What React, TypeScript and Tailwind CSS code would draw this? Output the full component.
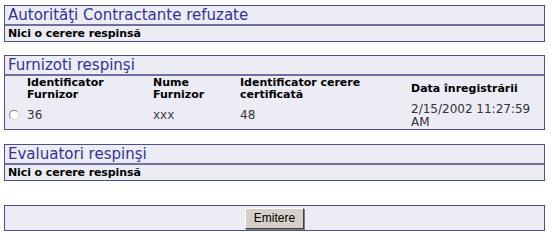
import React from "react";

const box = "border border-[#4f4f80] bg-[#ececf4]";
const head = "h-[20px] border-b-2 border-[#6f6fa0] pl-[3px] text-[15px] leading-[18px] text-[#333399]";
const body = "h-[15px] pl-[3px] text-[11px] font-bold leading-[15px] text-black tracking-[-0.1px]";
const th = "text-left align-middle font-bold leading-[12px] text-black p-0";
const td = "align-middle p-0 leading-[13px]";

export default function App() {
  return (
    <div className="min-h-[242px] w-[553px] bg-white pl-[4px] pt-[5px] font-['DejaVu_Sans',Verdana,sans-serif]">
      <div className="w-[541px]">
        <div className={box}>
          <div className={head}>Autorităţi Contractante refuzate</div>
          <div className={body}>Nici o cerere respinsă</div>
        </div>

        <div className={`${box} mt-[13px]`}>
          <div className={head}>Furnizoti respinşi</div>
          <table className="w-full border-collapse text-[11px]">
            <thead>
              <tr className="h-[25px]">
                <th className="w-[22px] p-0"></th>
                <th className={`${th} w-[126px]`}>
                  Identificator<br />Furnizor
                </th>
                <th className={`${th} w-[87px]`}>
                  Nume<br />Furnizor
                </th>
                <th className={`${th} w-[171px]`}>
                  Identificator cerere<br />certificată
                </th>
                <th className={th}>Data înregistrării</th>
              </tr>
            </thead>
            <tbody>
              <tr className="h-[28px] text-[12px] text-[#333333]">
                <td className="p-0 pl-[4px] align-middle">
                  <span className="block h-[10px] w-[10px] rounded-full border border-t-[#808080] border-l-[#808080] border-r-[#d8d8d8] border-b-[#d8d8d8] bg-white" />
                </td>
                <td className={td}>36</td>
                <td className={`${td} text-[#444444]`}>xxx</td>
                <td className={td}>48</td>
                <td className={`${td} pt-[2px]`}>
                  2/15/2002 11:27:59<br />AM
                </td>
              </tr>
            </tbody>
          </table>
        </div>

        <div className={`${box} mt-[14px]`}>
          <div className={head}>Evaluatori respinşi</div>
          <div className={body}>Nici o cerere respinsă</div>
        </div>

        <div className={`${box} mt-[24px] flex h-[26px] items-center justify-center`}>
          <button className="h-[21px] w-[59px] border border-t-white border-l-white border-r-[#404040] border-b-[#404040] bg-[#d4d0c8] font-['Liberation_Sans',Arial,sans-serif] text-[12px] leading-[19px] text-black shadow-[1px_1px_0_#808080]">
            Emitere
          </button>
        </div>
      </div>
    </div>
  );
}
